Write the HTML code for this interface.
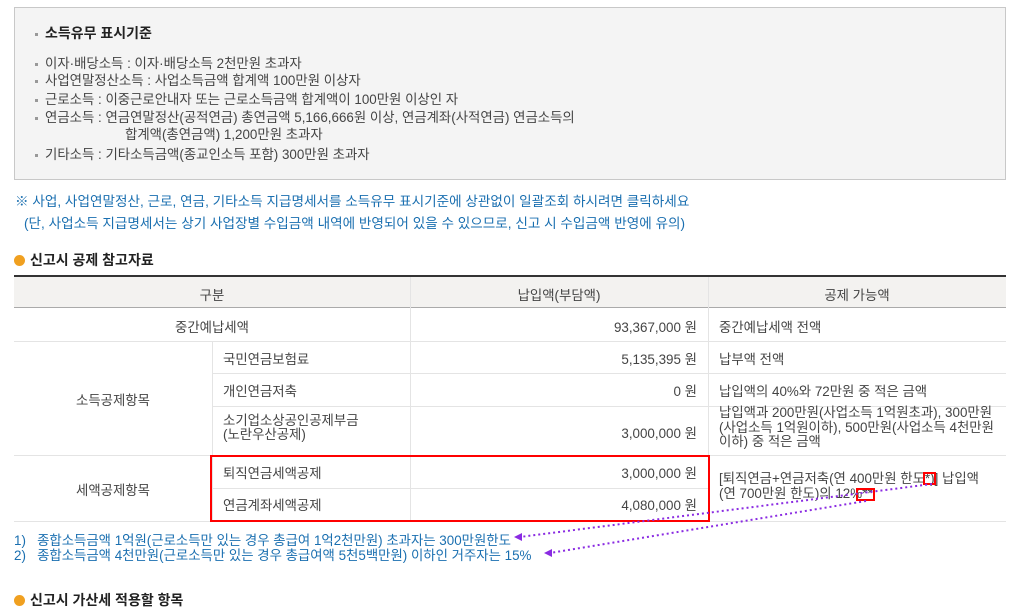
<!DOCTYPE html>
<html><head><meta charset="utf-8"><style>
*{margin:0;padding:0;box-sizing:border-box}
body{width:1024px;height:598px;overflow:hidden;background:#fff;font-family:"Liberation Sans","Noto Sans CJK KR","NanumGothic",sans-serif;font-size:13.4px;color:#333;position:relative}
.a{position:absolute;white-space:nowrap}
.box{position:absolute;left:14px;top:7px;width:992px;height:173px;background:#f4f4f4;border:1px solid #c8c8c8}
.li{position:absolute;left:20px;font-size:13.4px;color:#444;white-space:nowrap}
.li:before{content:"";display:inline-block;width:3px;height:3px;background:#999;margin-right:7px;vertical-align:middle}
.blue{color:#1a6fb0}
.c{position:absolute;font-size:13.4px;color:#444;white-space:nowrap}
.hl{position:absolute;height:1px;background:#e4e4e4}
.vl{position:absolute;width:1px;background:#e4e4e4}
.dot{display:inline-block;width:11px;height:11px;border-radius:50%;background:#f0a020;vertical-align:-1px;margin-right:5px;position:relative}
</style></head><body>
<div class="box">
<div class="li" style="top:15px;font-weight:bold;color:#222;font-size:14px">소득유무 표시기준</div>
<div class="li" style="top:44px">이자·배당소득 : 이자·배당소득 2천만원 초과자</div>
<div class="li" style="top:61px">사업연말정산소득 : 사업소득금액 합계액 100만원 이상자</div>
<div class="li" style="top:80px">근로소득 : 이중근로안내자 또는 근로소득금액 합계액이 100만원 이상인 자</div>
<div class="li" style="top:98px">연금소득 : 연금연말정산(공적연금) 총연금액 5,166,666원 이상, 연금계좌(사적연금) 연금소득의</div>
<div class="a" style="left:110px;top:115px;color:#444">합계액(총연금액) 1,200만원 초과자</div>
<div class="li" style="top:135px">기타소득 : 기타소득금액(종교인소득 포함) 300만원 초과자</div>
</div>
<div class="a blue" style="left:15px;top:190px;font-size:13.6px">※ 사업, 사업연말정산, 근로, 연금, 기타소득 지급명세서를 소득유무 표시기준에 상관없이 일괄조회 하시려면 클릭하세요</div>
<div class="a blue" style="left:24px;top:212px;font-size:13.6px">(단, 사업소득 지급명세서는 상기 사업장별 수입금액 내역에 반영되어 있을 수 있으므로, 신고 시 수입금액 반영에 유의)</div>
<div class="a" style="left:14px;top:250px;font-size:14px;font-weight:bold;color:#222"><span class="dot"></span>신고시 공제 참고자료</div>
<div class="a" style="left:14px;top:275px;width:992px;height:2px;background:#333"></div>
<div class="a" style="left:14px;top:277px;width:992px;height:31px;background:#f3f2f0;border-bottom:1px solid #aaa"></div>
<div class="vl" style="left:410px;top:277px;height:244px"></div>
<div class="vl" style="left:708px;top:277px;height:244px"></div>
<div class="vl" style="left:212px;top:341px;height:180px"></div>
<div class="hl" style="left:14px;top:341px;width:992px"></div>
<div class="hl" style="left:212px;top:373px;width:794px"></div>
<div class="hl" style="left:212px;top:406px;width:794px"></div>
<div class="hl" style="left:14px;top:455px;width:992px"></div>
<div class="hl" style="left:212px;top:488px;width:496px"></div>
<div class="hl" style="left:14px;top:521px;width:992px"></div>
<div class="c" style="left:14px;width:396px;text-align:center;top:284px">구분</div>
<div class="c" style="left:410px;width:298px;text-align:center;top:284px">납입액(부담액)</div>
<div class="c" style="left:708px;width:298px;text-align:center;top:284px">공제 가능액</div>
<div class="c" style="left:14px;width:396px;text-align:center;top:316px">중간예납세액</div>
<div class="c" style="left:14px;width:198px;text-align:center;top:389px">소득공제항목</div>
<div class="c" style="left:14px;width:198px;text-align:center;top:479px">세액공제항목</div>
<div class="c" style="left:223px;top:348px">국민연금보험료</div>
<div class="c" style="left:223px;top:380px">개인연금저축</div>
<div class="c" style="left:223px;top:414px;line-height:14px">소기업소상공인공제부금<br>(노란우산공제)</div>
<div class="c" style="left:223px;top:462px">퇴직연금세액공제</div>
<div class="c" style="left:223px;top:494px">연금계좌세액공제</div>
<div class="c" style="left:410px;width:287px;text-align:right;top:316px">93,367,000 원</div>
<div class="c" style="left:410px;width:287px;text-align:right;top:348px">5,135,395 원</div>
<div class="c" style="left:410px;width:287px;text-align:right;top:380px">0 원</div>
<div class="c" style="left:410px;width:287px;text-align:right;top:422px">3,000,000 원</div>
<div class="c" style="left:410px;width:287px;text-align:right;top:462px">3,000,000 원</div>
<div class="c" style="left:410px;width:287px;text-align:right;top:494px">4,080,000 원</div>
<div class="c" style="left:719px;top:316px">중간예납세액 전액</div>
<div class="c" style="left:719px;top:348px">납부액 전액</div>
<div class="c" style="left:719px;top:380px">납입액의 40%와 72만원 중 적은 금액</div>
<div class="c" style="left:719px;top:406px;line-height:14.5px">납입액과 200만원(사업소득 1억원초과), 300만원<br>(사업소득 1억원이하), 500만원(사업소득 4천만원<br>이하) 중 적은 금액</div>
<div class="c" style="left:719px;top:471px;line-height:15px">[퇴직연금+연금저축(연 400만원 한도*)] 납입액<br>(연 700만원 한도)의 12%**</div>
<div class="a" style="left:210px;top:455px;width:500px;height:67px;border:2px solid #f00"></div>
<div class="a" style="left:923px;top:472px;width:13px;height:13px;border:2px solid #f00"></div>
<div class="a" style="left:856px;top:488px;width:19px;height:13px;border:2px solid #f00"></div>
<div class="a blue" style="left:14px;top:529px">1)&nbsp;&nbsp;&nbsp;종합소득금액 1억원(근로소득만 있는 경우 총급여 1억2천만원) 초과자는 300만원한도</div>
<div class="a blue" style="left:14px;top:544px">2)&nbsp;&nbsp;&nbsp;종합소득금액 4천만원(근로소득만 있는 경우 총급여액 5천5백만원) 이하인 거주자는 15%</div>
<svg class="a" style="left:0;top:0" width="1024" height="598">
<line x1="932" y1="484" x2="520" y2="537" stroke="#8a2be2" stroke-width="2" stroke-dasharray="2 3"/>
<line x1="866" y1="501" x2="550" y2="553" stroke="#8a2be2" stroke-width="2" stroke-dasharray="2 3"/>
<polygon points="514,537 522,533 522,541" fill="#8a2be2"/>
<polygon points="544,553 552,549 552,557" fill="#8a2be2"/>
</svg>
<div class="a" style="left:14px;top:590px;font-size:14px;font-weight:bold;color:#222"><span class="dot"></span>신고시 가산세 적용할 항목</div>
</body></html>
